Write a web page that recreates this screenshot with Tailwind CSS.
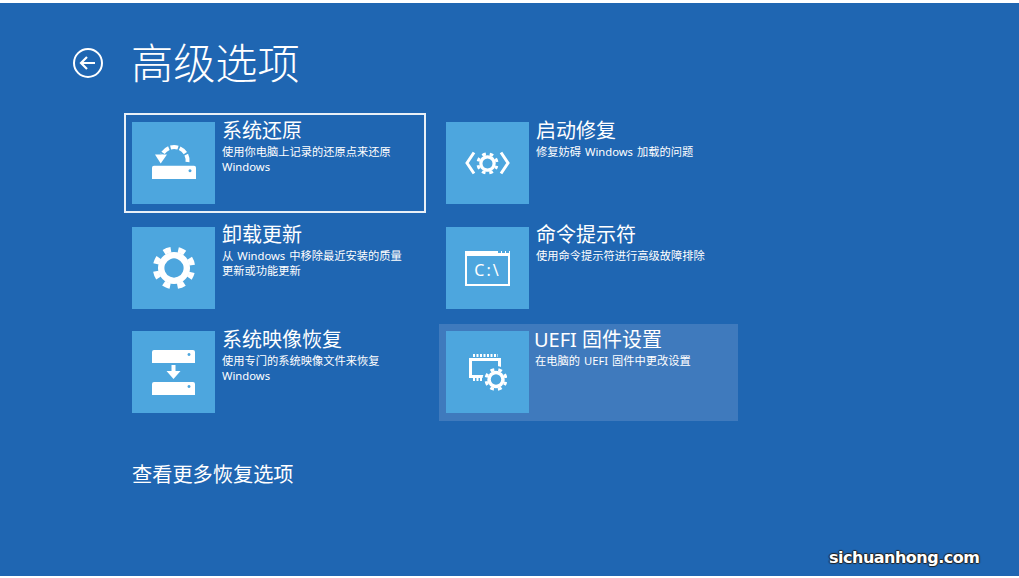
<!DOCTYPE html>
<html lang="zh-CN">
<head>
  <meta charset="UTF-8">
  <title>高级选项</title>
  <script src="https://cdn.jsdelivr.net/npm/@tailwindcss/browser@4"></script>
</head>
<body class="bg-white h-[578px] w-[1019px] overflow-hidden font-['Noto_Sans','Noto_Sans_CJK_SC',sans-serif] text-white">
  <svg class="hidden">
    <symbol id="gear" viewBox="0 0 60 60">
      <g transform="rotate(22.5 30 30)" fill="none" stroke="#fff">
        <circle cx="30" cy="30" r="16" stroke-width="8"/>
        <circle cx="30" cy="30" r="23" stroke-width="7" stroke-dasharray="9 9.06" stroke-dashoffset="4.5"/>
      </g>
    </symbol>
  </svg>

  <main class="relative mt-[3px] h-[573px] bg-[#1f66b2] pl-[73px] pt-[35px]">
    <!-- Header -->
    <header class="flex items-center h-[50px]">
      <svg class="w-[30px] h-[30px]" viewBox="0 0 30 30" fill="none" stroke="#fff">
        <circle cx="15" cy="15" r="14" stroke-width="2"/>
        <path d="M22 15H8M14 9l-6 6 6 6" stroke-width="2.2"/>
      </svg>
      <h1 class="ml-[28px] text-[42.2px] leading-[50px] font-light">高级选项</h1>
    </header>

    <!-- Options -->
    <div class="ml-[51px] mt-[25px] grid grid-cols-[314px_300px] auto-rows-[100px] gap-y-[4px]">
      <a class="flex w-[302px] border-2 border-white/90 pl-[6px] pt-[7px]">
        <div class="w-[83px] h-[82px] bg-[#4da6de] flex items-center justify-center">
          <svg class="w-[44px] h-[36px] mb-[2px]" viewBox="0 0 44 36">
            <path d="M35.500 18A13.500 13.500 0 0 0 10 10.500" fill="none" stroke="#fff" stroke-width="4" stroke-dasharray="7.500 1.800"/>
            <path d="M3 10.500h12L8.700 19.500z" fill="#fff"/>
            <path fill-rule="evenodd" d="M2 21.700h40a2 2 0 0 1 2 2V35H0V23.700a2 2 0 0 1 2-2zm36 3.500a1.500 1.500 0 1 0 .01 0z" fill="#fff"/>
          </svg>
        </div>
        <div class="ml-[7px]">
          <h2 class="text-[20px] leading-[20px] -mt-[1px]">系统还原</h2>
          <p class="text-[11.25px] leading-[15px] mt-[3px] w-[172px] [word-spacing:1px]">使用你电脑上记录的还原点来还原 Windows</p>
        </div>
      </a>
      <a class="flex pl-[8px] pt-[9px]">
        <div class="w-[83px] h-[82px] bg-[#4da6de] flex items-center justify-center">
          <svg class="w-[45px] h-[24px]" viewBox="0 0 45 24">
            <path d="M9 1.500 2 12l7 10.500M36 1.500 43 12l-7 10.500" fill="none" stroke="#fff" stroke-width="3"/>
            <use href="#gear" x="10" y="0" width="25" height="25"/>
          </svg>
        </div>
        <div class="ml-[7px]">
          <h2 class="text-[20px] leading-[20px] -mt-[1px]">启动修复</h2>
          <p class="text-[11.25px] leading-[15px] mt-[3px] [word-spacing:1px]">修复妨碍 Windows 加载的问题</p>
        </div>
      </a>

      <a class="flex pl-[8px] pt-[10px]">
        <div class="w-[83px] h-[82px] bg-[#4da6de] flex items-center justify-center">
          <svg class="w-[48px] h-[48px]" viewBox="0 0 60 60"><use href="#gear" width="60" height="60"/></svg>
        </div>
        <div class="ml-[7px]">
          <h2 class="text-[20px] leading-[20px] -mt-[2px]">卸载更新</h2>
          <p class="text-[11.25px] leading-[15px] mt-[3px] w-[184px] [word-spacing:1px]">从 Windows 中移除最近安装的质量更新或功能更新</p>
        </div>
      </a>
      <a class="flex pl-[8px] pt-[10px]">
        <div class="relative w-[83px] h-[82px] bg-[#4da6de] flex items-center justify-center">
          <div class="w-[45px] h-[35px] border-[2px] border-t-[5px] border-white flex items-center justify-center text-[16px] leading-none tracking-[2px]">C:\</div>
          <div class="absolute left-[52px] top-[24px] flex gap-[1px]">
            <i class="w-[3px] h-[2px] bg-[#4da6de]"></i><i class="w-[3px] h-[2px] bg-[#4da6de]"></i><i class="w-[3px] h-[2px] bg-[#4da6de]"></i>
          </div>
        </div>
        <div class="ml-[7px]">
          <h2 class="text-[20px] leading-[20px] -mt-[2px]">命令提示符</h2>
          <p class="text-[11.25px] leading-[15px] mt-[3px]">使用命令提示符进行高级故障排除</p>
        </div>
      </a>

      <a class="flex pl-[8px] pt-[10px]">
        <div class="w-[83px] h-[82px] bg-[#4da6de] flex items-center justify-center">
          <svg class="w-[43px] h-[45px]" viewBox="0 0 43 45">
            <path fill-rule="evenodd" d="M2 0h39a2 2 0 0 1 2 2v11H0V2a2 2 0 0 1 2-2zm35 3a1.500 1.500 0 1 0 .01 0zM2 32h39a2 2 0 0 1 2 2v11H0V34a2 2 0 0 1 2-2zm35 3a1.500 1.500 0 1 0 .01 0z" fill="#fff"/>
            <path d="M19.500 15h4v6h5l-7 8-7-8h5z" fill="#fff"/>
          </svg>
        </div>
        <div class="ml-[7px]">
          <h2 class="text-[20px] leading-[20px] -mt-[1px]">系统映像恢复</h2>
          <p class="text-[11.25px] leading-[15px] mt-[3px] w-[172px] [word-spacing:1px]">使用专门的系统映像文件来恢复 Windows</p>
        </div>
      </a>
      <a class="flex self-end ml-[1px] w-[299px] h-[97px] bg-[#3f7abd] pl-[7px] pt-[7px]">
        <div class="w-[83px] h-[82px] bg-[#4da6de] flex items-center justify-center">
          <svg class="w-[38px] h-[37px] ml-[1px]" viewBox="0 0 38 37">
            <path d="M4 1.500h25" fill="none" stroke="#fff" stroke-width="3" stroke-dasharray="2 1.500"/>
            <rect x="1.500" y="5.500" width="29" height="17" fill="none" stroke="#fff" stroke-width="3"/>
            <path d="M4 25.500h10" fill="none" stroke="#fff" stroke-width="3" stroke-dasharray="2 1.500"/>
            <circle cx="27" cy="25.500" r="13.500" fill="#4da6de"/>
            <use href="#gear" x="14" y="12.500" width="26" height="26"/>
          </svg>
        </div>
        <div class="ml-[5px]">
          <h2 class="text-[20px] leading-[20px] -mt-[1px]">UEFI 固件设置</h2>
          <p class="text-[11.25px] leading-[15px] mt-[3px] ml-[1px] [word-spacing:1px]">在电脑的 UEFI 固件中更改设置</p>
        </div>
      </a>
    </div>

    <a class="block ml-[59px] mt-[40px] text-[20.2px] leading-[26px]">查看更多恢复选项</a>

    <span class="absolute left-[829px] top-[544px] text-[16px] leading-[22px] tracking-[-0.5px] font-['DejaVu_Sans'] font-bold [text-shadow:1px_0_1px_#222,-1px_0_1px_#222,0_1px_1px_#222,0_-1px_1px_#222]">sichuanhong.com</span>
  </main>
</body>
</html>
